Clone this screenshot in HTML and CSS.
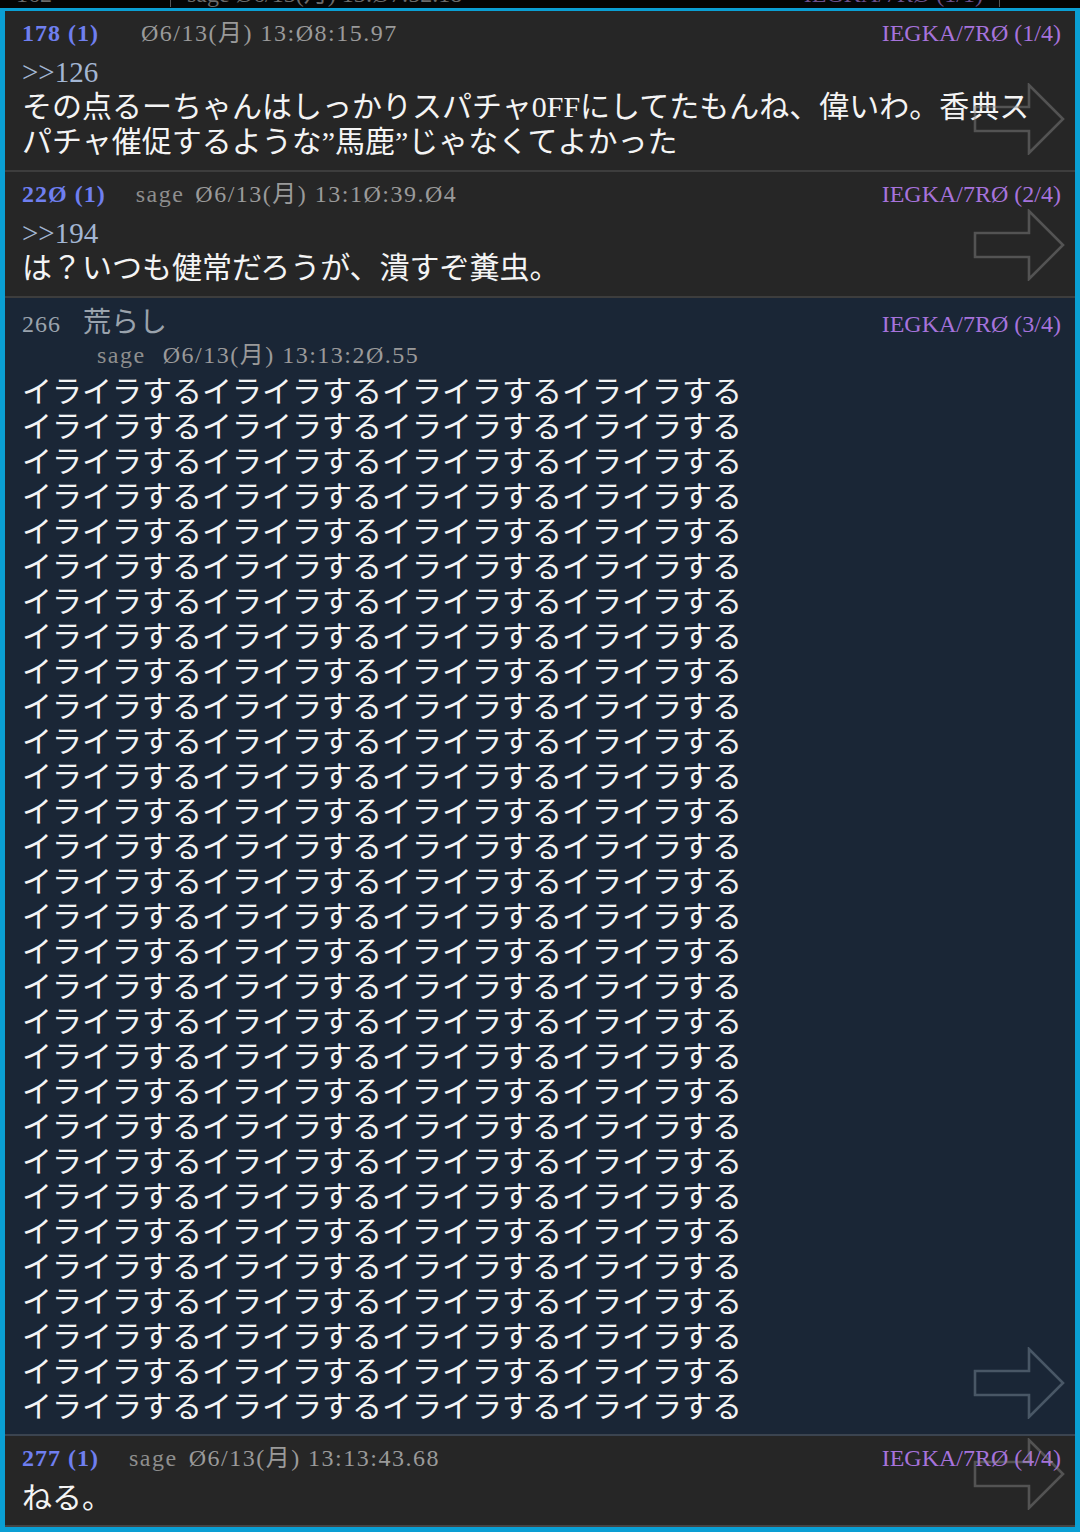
FILE: index.html
```html
<!DOCTYPE html>
<html lang="ja">
<head>
  <meta charset="UTF-8" />
  <meta name="viewport" content="width=device-width, initial-scale=1.0" />
  <title>スレッド</title>
  <link rel="stylesheet" href="styles.css">
</head>
<body>
  <div class="prev">
    <div class="prev-row">
      <span class="prev-cell">162</span>
      <span class="prev-cell prev-meta">sage Ø6/13(月) 13:Ø7:52.18</span>
      <span class="prev-cell prev-id">IEGKA/7RØ (1/1)</span>
    </div>
  </div>

  <div class="thread">
    <div class="post">
      <div class="post-head">
        <div class="head-left">
          <span class="num">178 (1)</span>
          <span class="date solo">Ø6/13(月) 13:Ø8:15.97</span>
        </div>
        <span class="id">IEGKA/7RØ (1/4)</span>
      </div>
      <div class="anchor">&gt;&gt;126</div>
      <div class="body">その点るーちゃんはしっかりスパチャ0FFにしてたもんね、偉いわ。香典スパチャ催促するような”馬鹿”じゃなくてよかった</div>
      <svg class="arrow" viewBox="0 0 92 72"><path d="M2 24 H56 V2 L90 36 L56 70 V48 H2 Z" /></svg>
    </div>

    <div class="post">
      <div class="post-head">
        <div class="head-left">
          <span class="num">22Ø (1)</span>
          <span class="mail">sage</span>
          <span class="date">Ø6/13(月) 13:1Ø:39.Ø4</span>
        </div>
        <span class="id">IEGKA/7RØ (2/4)</span>
      </div>
      <div class="anchor">&gt;&gt;194</div>
      <div class="body">は？いつも健常だろうが、潰すぞ糞虫。</div>
      <svg class="arrow" viewBox="0 0 92 72"><path d="M2 24 H56 V2 L90 36 L56 70 V48 H2 Z" /></svg>
    </div>

    <div class="post post-ng">
      <div class="post-head head-tall">
        <div class="head-left">
          <span class="num num-plain">266</span>
          <span class="name">荒らし</span>
        </div>
        <span class="id">IEGKA/7RØ (3/4)</span>
      </div>
      <div class="meta-line">
        <span class="mail">sage</span>
        <span class="date">Ø6/13(月) 13:13:2Ø.55</span>
      </div>
      <div class="body body-long">
        イライラするイライラするイライラするイライラする<br>
        イライラするイライラするイライラするイライラする<br>
        イライラするイライラするイライラするイライラする<br>
        イライラするイライラするイライラするイライラする<br>
        イライラするイライラするイライラするイライラする<br>
        イライラするイライラするイライラするイライラする<br>
        イライラするイライラするイライラするイライラする<br>
        イライラするイライラするイライラするイライラする<br>
        イライラするイライラするイライラするイライラする<br>
        イライラするイライラするイライラするイライラする<br>
        イライラするイライラするイライラするイライラする<br>
        イライラするイライラするイライラするイライラする<br>
        イライラするイライラするイライラするイライラする<br>
        イライラするイライラするイライラするイライラする<br>
        イライラするイライラするイライラするイライラする<br>
        イライラするイライラするイライラするイライラする<br>
        イライラするイライラするイライラするイライラする<br>
        イライラするイライラするイライラするイライラする<br>
        イライラするイライラするイライラするイライラする<br>
        イライラするイライラするイライラするイライラする<br>
        イライラするイライラするイライラするイライラする<br>
        イライラするイライラするイライラするイライラする<br>
        イライラするイライラするイライラするイライラする<br>
        イライラするイライラするイライラするイライラする<br>
        イライラするイライラするイライラするイライラする<br>
        イライラするイライラするイライラするイライラする<br>
        イライラするイライラするイライラするイライラする<br>
        イライラするイライラするイライラするイライラする<br>
        イライラするイライラするイライラするイライラする<br>
        イライラするイライラするイライラするイライラする
      </div>
      <svg class="arrow" viewBox="0 0 92 72"><path d="M2 24 H56 V2 L90 36 L56 70 V48 H2 Z" /></svg>
    </div>

    <div class="post">
      <div class="post-head">
        <div class="head-left">
          <span class="num">277 (1)</span>
          <span class="mail">sage</span>
          <span class="date">Ø6/13(月) 13:13:43.68</span>
        </div>
        <span class="id">IEGKA/7RØ (4/4)</span>
      </div>
      <div class="body body-first">ねる。</div>
      <svg class="arrow" viewBox="0 0 92 72"><path d="M2 24 H56 V2 L90 36 L56 70 V48 H2 Z" /></svg>
    </div>
  </div>
</body>
</html>
```

FILE: styles.css
```css
body {
  margin: 0;
  padding: 0;
  background: #000;
  font-family: "Liberation Serif", "Noto Sans CJK JP", serif;
  color: #fff;
}
.prev {
  height: 8px;
  overflow: hidden;
  background: #050505;
}
.prev-row {
  display: flex;
  margin-top: -19px;
  font-size: 24px;
  line-height: 26px;
  color: #6a6a6a;
  white-space: nowrap;
}
.prev-cell {
  padding: 0 16px;
}
.prev-cell:first-child {
  width: 138px;
}
.prev-meta {
  border-left: 1px solid #555;
  flex: 1;
}
.prev-id {
  color: #6a4f8a;
  border-right: 1px solid #555;
  margin-right: 80px;
}
.thread {
  border: 5px solid #0a9fd4;
  border-top-width: 3px;
  background: #262626;
}
.post {
  position: relative;
  padding: 6px 14px 11px 17px;
  border-bottom: 2px solid #3d3d3d;
  background: #262626;
}
.post:last-child {
  border-bottom-color: #444;
  padding-bottom: 10px;
}
.post-ng {
  background: #1a2636;
  border-bottom-color: #3b4450;
  padding-bottom: 10px;
}
.post-head {
  display: flex;
  justify-content: space-between;
  align-items: baseline;
  font-size: 24px;
  line-height: 32px;
  white-space: nowrap;
}
.head-left {
  display: flex;
  align-items: baseline;
}
.num {
  color: #6f7ff0;
  font-weight: bold;
  letter-spacing: 1px;
  margin-right: 30px;
}
.num-plain {
  color: #9aa3ad;
  font-weight: normal;
  margin-right: 22px;
}
.name {
  color: #9aa3ad;
  font-family: "Noto Sans CJK JP", sans-serif;
  font-size: 28px;
}
.mail {
  color: #8e8e8e;
  letter-spacing: 1.5px;
  margin-right: 11px;
}
.date {
  color: #9a9a9a;
  letter-spacing: 1.5px;
}
.date.solo {
  margin-left: 12px;
}
.id {
  color: #a673dc;
}
.meta-line {
  font-size: 24px;
  line-height: 30px;
  padding-left: 75px;
  white-space: nowrap;
}
.anchor {
  color: #a3b6d3;
  font-size: 29px;
  line-height: 34px;
  margin-top: 6px;
}
.body {
  font-size: 30px;
  line-height: 35px;
  color: #f4f4f4;
  padding-right: 14px;
}
.body-long {
  margin-top: 4px;
}
.body-first {
  margin-top: 6px;
}
.arrow {
  position: absolute;
  right: 10px;
  bottom: 15px;
  width: 92px;
  height: 72px;
}
.arrow path {
  fill: none;
  stroke: rgba(140, 140, 140, 0.45);
  stroke-width: 2.6;
  stroke-linejoin: miter;
}
.post-ng .arrow path {
  stroke: rgba(120, 135, 150, 0.5);
}
```
